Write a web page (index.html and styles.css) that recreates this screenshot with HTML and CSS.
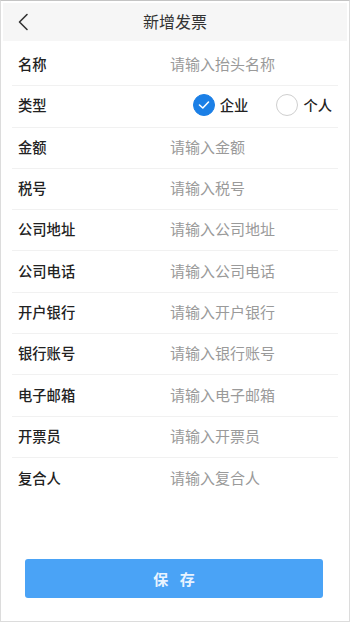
FILE: index.html
```html
<!DOCTYPE html>
<html lang="zh">
<head>
<meta charset="utf-8">
<title>新增发票</title>
<link rel="stylesheet" href="styles.css">
</head>
<body>
<div class="frame">
  <header class="nav">
    <svg class="back" width="12" height="18" viewBox="0 0 12 18"><path d="M10 1.5 L2.5 9 L10 16.5" fill="none" stroke="#333" stroke-width="1.6" stroke-linecap="round" stroke-linejoin="round"/></svg>
    <h1 class="title">新增发票</h1>
  </header>
  <div class="list">
    <div class="row"><span class="label">名称</span><span class="ph">请输入抬头名称</span></div>
    <div class="row"><span class="label">类型</span>
      <div class="radios">
        <span class="radio"><span class="circle on"><svg width="12" height="10" viewBox="0 0 12 10"><path d="M1.5 5 L4.8 8 L10.5 2" fill="none" stroke="#fff" stroke-width="1.6" stroke-linecap="round" stroke-linejoin="round"/></svg></span><span class="rtext">企业</span></span>
        <span class="radio"><span class="circle"></span><span class="rtext">个人</span></span>
      </div>
    </div>
    <div class="row"><span class="label">金额</span><span class="ph">请输入金额</span></div>
    <div class="row"><span class="label">税号</span><span class="ph">请输入税号</span></div>
    <div class="row"><span class="label">公司地址</span><span class="ph">请输入公司地址</span></div>
    <div class="row"><span class="label">公司电话</span><span class="ph">请输入公司电话</span></div>
    <div class="row"><span class="label">开户银行</span><span class="ph">请输入开户银行</span></div>
    <div class="row"><span class="label">银行账号</span><span class="ph">请输入银行账号</span></div>
    <div class="row"><span class="label">电子邮箱</span><span class="ph">请输入电子邮箱</span></div>
    <div class="row"><span class="label">开票员</span><span class="ph">请输入开票员</span></div>
    <div class="row last"><span class="label">复合人</span><span class="ph">请输入复合人</span></div>
  </div>
  <div class="footer">
    <button class="save">保 存</button>
  </div>
</div>
</body>
</html>
```
FILE: styles.css
```css
html, body {
  margin: 0;
  padding: 0;
  background: #fff;
}
body {
  font-family: "Noto Sans CJK SC", "Noto Sans", sans-serif;
  color: #222;
}
.frame {
  box-sizing: border-box;
  width: 350px;
  height: 622px;
  border: 1px solid #dcdcdc;
  border-top-color: #c4c4c4;
  padding: 2px 2px 0 2px;
  display: flex;
  flex-direction: column;
}
.nav {
  height: 38px;
  background: #f6f6f6;
  display: flex;
  align-items: center;
  justify-content: center;
  position: relative;
}
.back {
  position: absolute;
  left: 14px;
  top: 10px;
}
.title {
  margin: 0;
  font-size: 16px;
  font-weight: 400;
  color: #333;
  line-height: 1;
  padding-bottom: 2px;
}
.list {
  padding: 4px 9px 0 9px;
}
.row {
  box-sizing: border-box;
  height: 41.3px;
  border-bottom: 1px solid #f1f1f1;
  display: flex;
  align-items: center;
  padding: 0 0 3px 6px;
}
.row.last {
  border-bottom: none;
}
.label {
  width: 152px;
  font-size: 14.3px;
  font-weight: 500;
  color: #222;
}
.ph {
  font-size: 15px;
  color: #9a9a9a;
}
.radios {
  margin-left: auto;
  display: flex;
  align-items: center;
  gap: 28px;
  padding-right: 6px;
}
.radio {
  display: flex;
  align-items: center;
  gap: 5px;
}
.circle {
  box-sizing: border-box;
  width: 22px;
  height: 22px;
  border-radius: 50%;
  border: 1px solid #cfcfcf;
  display: flex;
  align-items: center;
  justify-content: center;
}
.circle.on {
  background: #1b7fe6;
  border-color: #1b7fe6;
}
.rtext {
  font-size: 14.3px;
  font-weight: 500;
  color: #222;
}
.footer {
  margin-top: auto;
  padding: 0 24px 23px 22px;
}
.save {
  width: 100%;
  height: 39px;
  border: none;
  border-radius: 3px;
  background: #4aa3f6;
  color: #e8f3ff;
  font-family: "Noto Sans CJK SC", "Noto Sans", sans-serif;
  font-size: 15px;
  font-weight: 700;
  letter-spacing: 4px;
  padding: 0 0 0 4px;
}
```
